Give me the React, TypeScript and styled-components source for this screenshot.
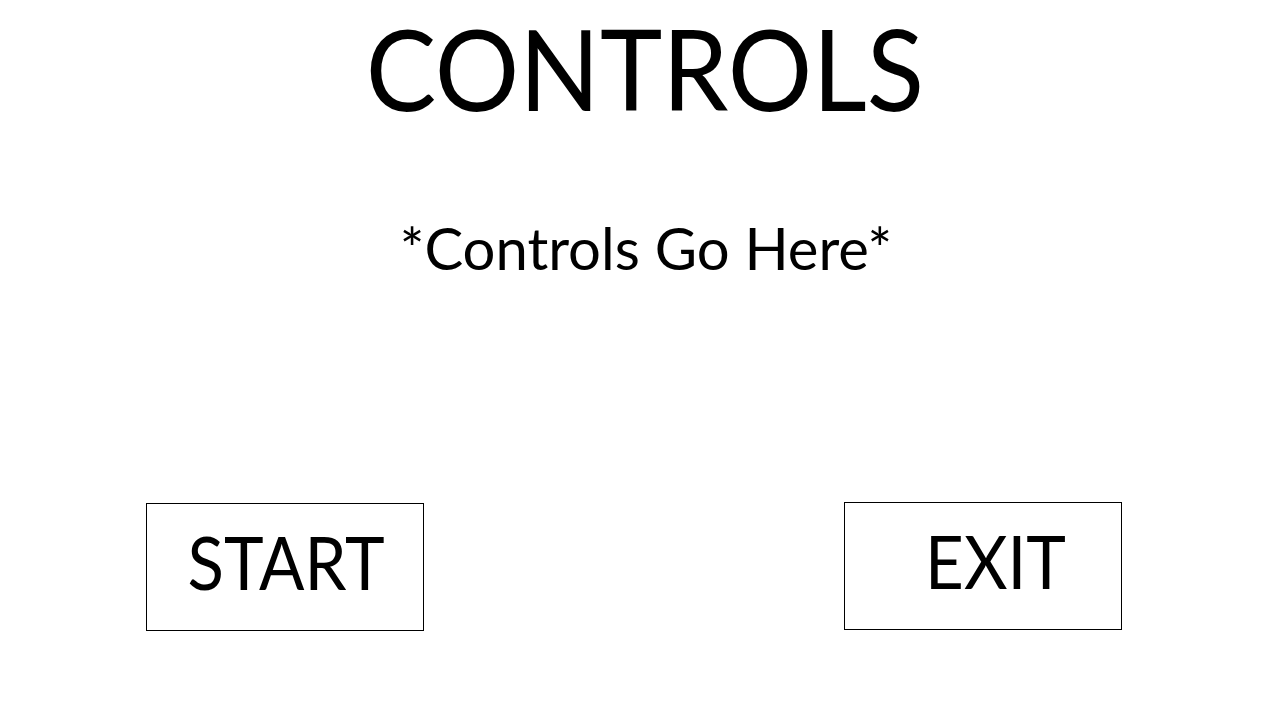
import styled, { createGlobalStyle } from "styled-components";

const GlobalStyle = createGlobalStyle`
  html, body {
    margin: 0;
    padding: 0;
    background: #fff;
  }
  body {
    font-family: Lato, "Open Sans", "Liberation Sans", sans-serif;
    color: #000;
  }
`;

const App = () => {
  return (
    <Slide>
      <GlobalStyle />
      <Title>CONTROLS</Title>
      <Subtitle>*Controls Go Here*</Subtitle>
      <ButtonRow>
        <SlideButton $top={1} $shift={2}>
          <Label>START</Label>
        </SlideButton>
        <SlideButton $shift={26}>
          <Label>EXIT</Label>
        </SlideButton>
      </ButtonRow>
    </Slide>
  );
};

const Slide = styled.div`
  width: 1268px;
  height: 704px;
  display: flex;
  flex-direction: column;
  align-items: center;
  overflow: hidden;
`;

const Title = styled.h1`
  margin: 0;
  padding-left: 24px;
  font-size: 113px;
  font-weight: 400;
  line-height: 1.2;
  transform: scaleX(0.935);
`;

const Subtitle = styled.div`
  margin-top: 77px;
  padding-left: 24px;
  font-size: 58px;
  line-height: 70px;
`;

const ButtonRow = styled.div`
  margin-top: 219px;
  width: 976px;
  display: flex;
  justify-content: space-between;
  align-items: flex-start;
`;

const SlideButton = styled.div<{ $shift?: number; $top?: number }>`
  box-sizing: border-box;
  width: 278px;
  height: 128px;
  margin-top: ${(p) => p.$top ?? 0}px;
  border: 1px solid #000;
  display: flex;
  align-items: center;
  justify-content: center;
  padding-left: ${(p) => p.$shift ?? 0}px;
  padding-bottom: 9px;
  font-size: 73px;
`;

const Label = styled.span`
  display: inline-block;
  transform: scaleX(0.92);
`;

export default App;
